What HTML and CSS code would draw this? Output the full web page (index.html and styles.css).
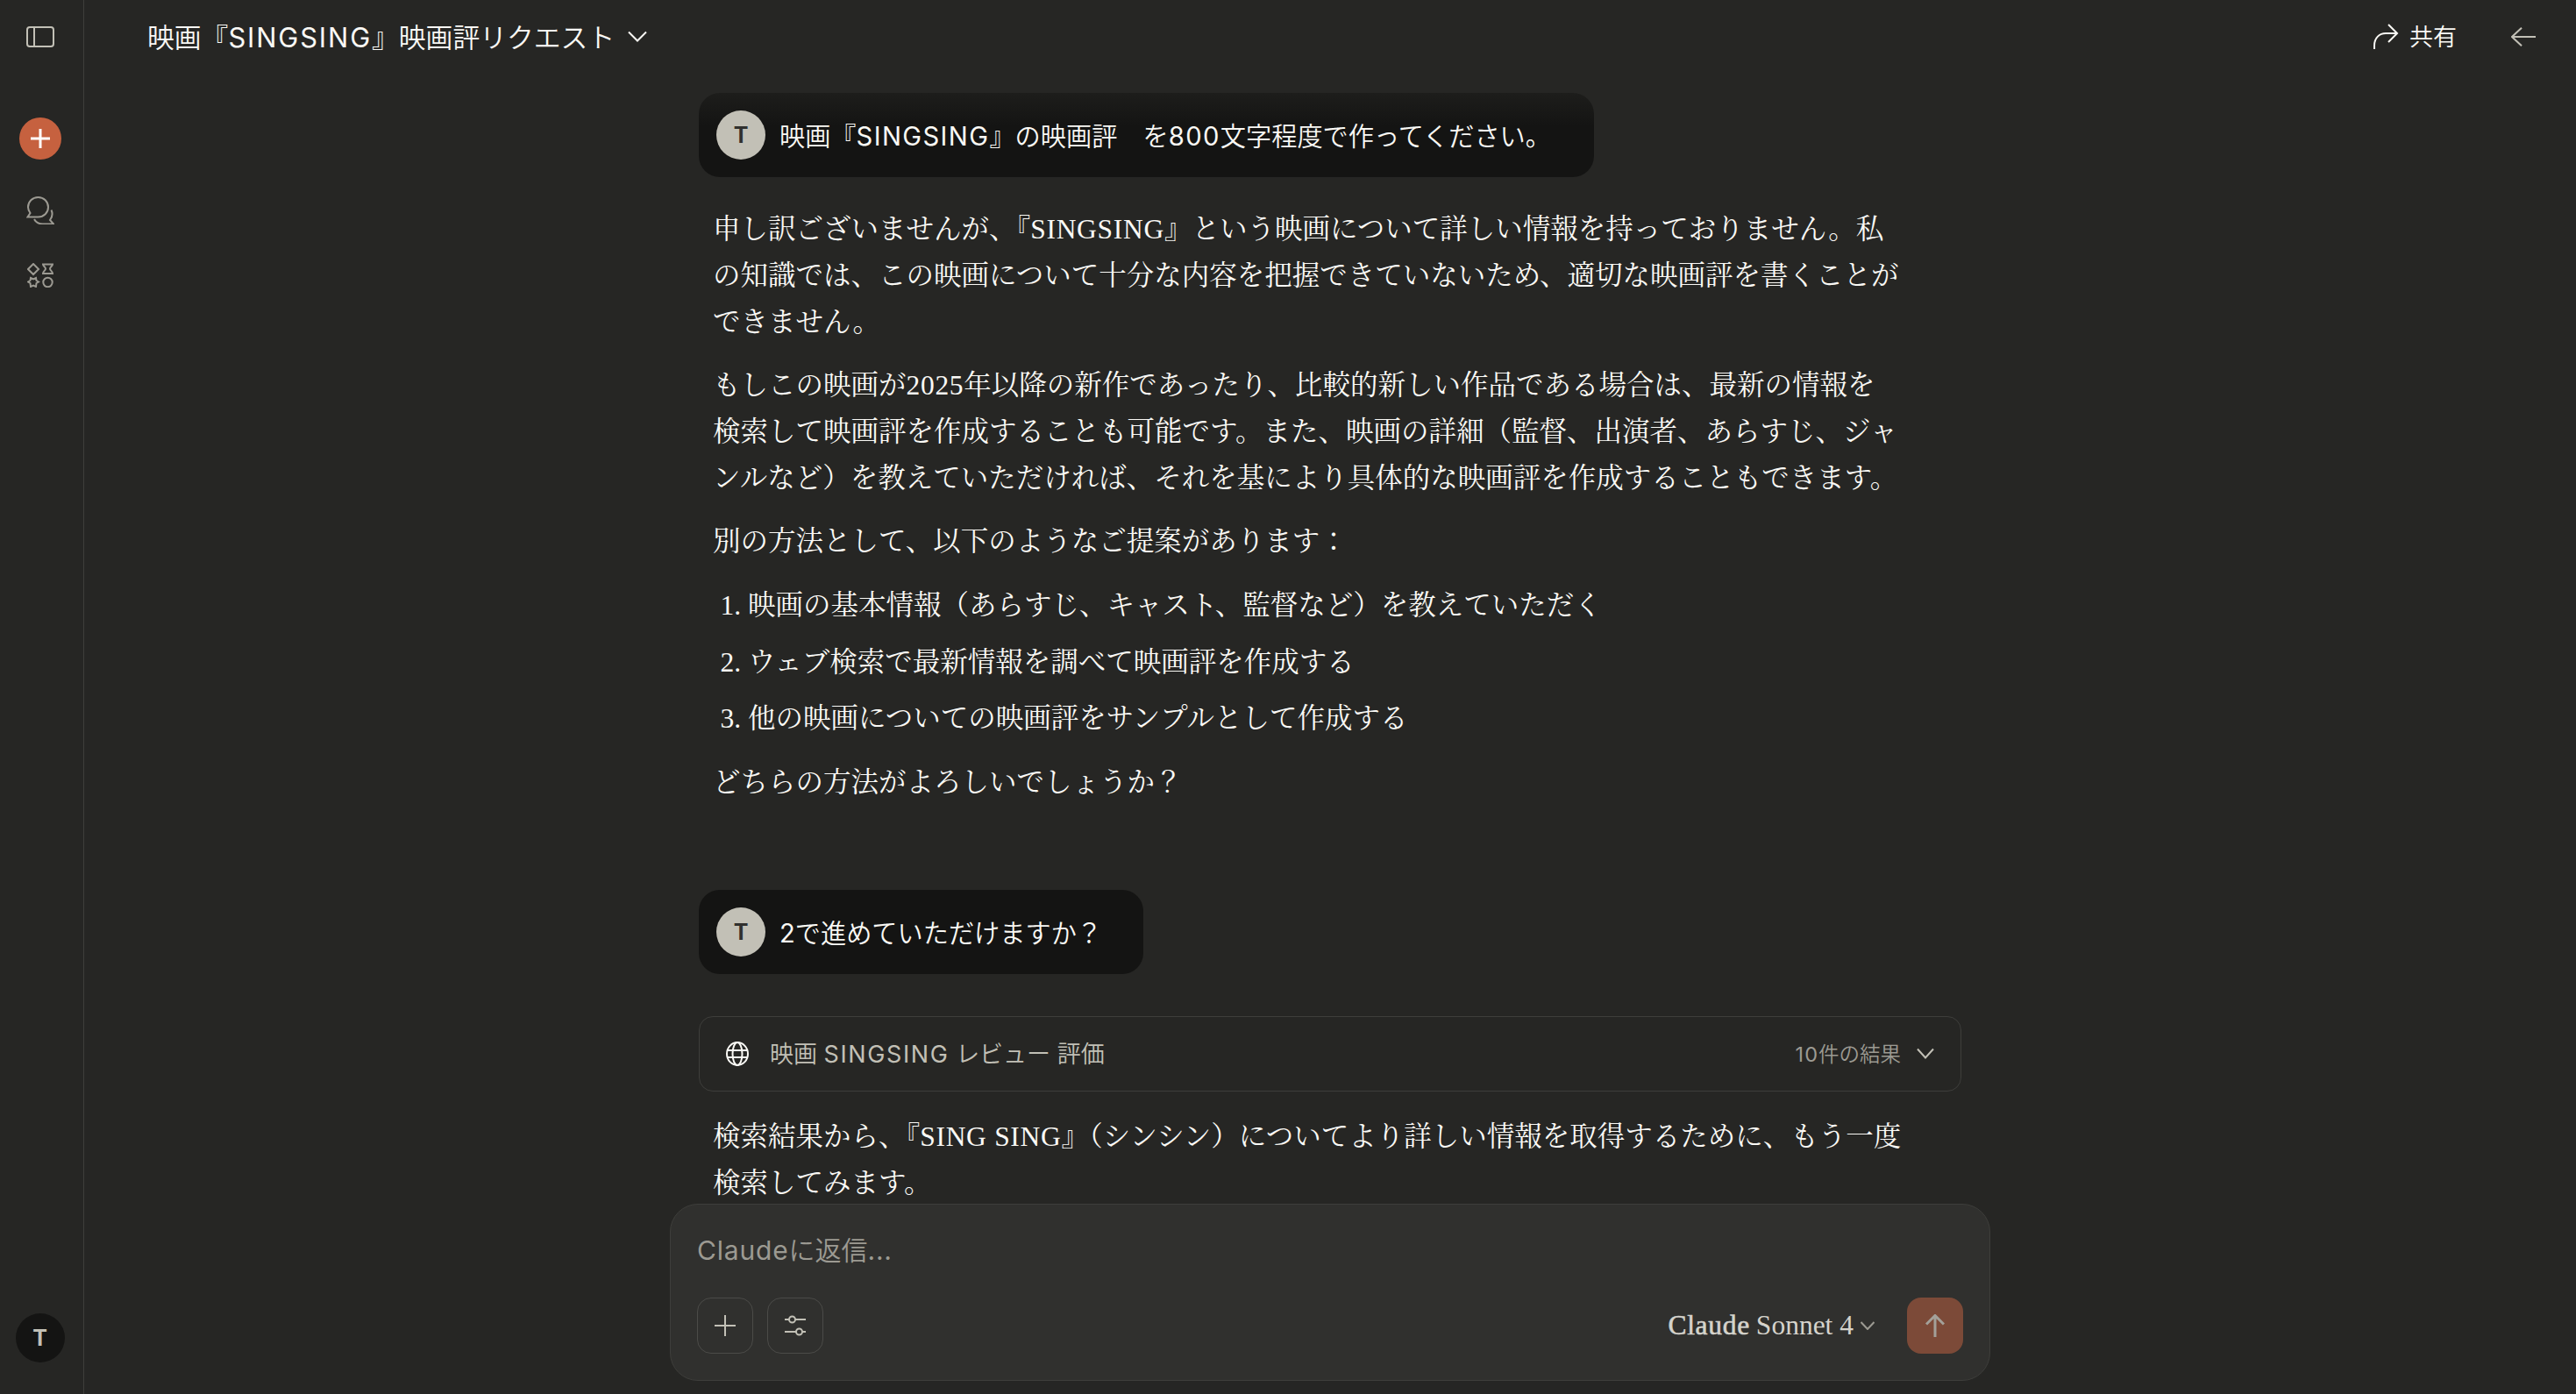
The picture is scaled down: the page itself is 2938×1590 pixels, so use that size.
FILE: index.html
```
<!DOCTYPE html>
<html lang="ja">
<head>
  <meta charset="UTF-8" />
  <meta name="viewport" content="width=device-width, initial-scale=1.0"/>
  <title>映画『SINGSING』映画評リクエスト</title>
  <link rel="stylesheet" href="styles.css">
</head>
<body>

  <aside class="sidebar">
    <svg class="panel-icon" width="32" height="24" viewBox="0 0 32 24"><rect x="1" y="1" width="30" height="22" rx="3"/><path d="M9 1v22"/></svg>
    <button class="new-chat"><svg width="22" height="22" viewBox="0 0 22 22"><path d="M11 0v22M0 11h22"/></svg></button>
    <svg class="chats-icon" width="32" height="32" viewBox="0 0 32 32"><path d="M13.500 1C20 1 25 6 25 12.300S20 23.500 13.500 23.500H1.500L4.500 19C3 17 2 15 2 12.300 2 6 7 1 13.500 1z"/><path d="M28.500 15.500c1.800 4 1.200 8-1.500 11.500l4 4.500H19c-4.500 0-8-2-10-5.500"/></svg>
    <svg class="apps-icon" width="30" height="28" viewBox="0 0 30 28"><path d="M7 1l6 6-6 6-6-6zM18 1.500h11c0 2-3 3-3 5s3 3 3 5.500H18c0-2.500 3-3.500 3-5.500s-3-3-3-5z"/><path d="M4 17l3 1.500L10 17l.5 3 2.500 1.500-2.500 1.500-.5 4-3-1.500L4 27l-.5-4L1 21.500 3.500 20z"/><circle cx="23.500" cy="22" r="5.200"/></svg>
    <div class="avatar avatar-dark">T</div>
  </aside>

  <main>
    <header>
      <div class="title"><span>映画『<span class="latin">SINGSING</span>』映画評リクエスト</span><svg width="22" height="14" viewBox="0 0 22 14"><path d="M1 1.500l10 10 10-10"/></svg></div>
      <div class="share"><svg width="30" height="30" viewBox="0 0 30 30"><path d="M2 29v-4C2 16 8 11 15 11h13M18 1l10 10-10 10"/></svg><span>共有</span></div>
      <svg class="back" width="28" height="22" viewBox="0 0 28 22"><path d="M28 11H1M12 0.700L1 11l11 10.300"/></svg>
    </header>

    <div class="thread">
      <div class="bubble first"><div class="avatar">T</div><span>映画『<span class="latin">SINGSING</span>』の映画評　を<span class="latin">800</span>文字程度で作ってください。</span></div>

      <div class="answer">
        <p>申し訳ございませんが、『<span class="latin">SINGSING</span>』という映画について詳しい情報を持っておりません。私<br>の知識では、この映画について十分な内容を把握できていないため、適切な映画評を書くことが<br>できません。</p>
        <p>もしこの映画が<span class="latin">2025</span>年以降の新作であったり、比較的新しい作品である場合は、最新の情報を<br>検索して映画評を作成することも可能です。また、映画の詳細（監督、出演者、あらすじ、ジャ<br>ンルなど）を教えていただければ、それを基により具体的な映画評を作成することもできます。</p>
        <p>別の方法として、以下のようなご提案があります：</p>
        <ol>
          <li>映画の基本情報（あらすじ、キャスト、監督など）を教えていただく</li>
          <li>ウェブ検索で最新情報を調べて映画評を作成する</li>
          <li>他の映画についての映画評をサンプルとして作成する</li>
        </ol>
        <p>どちらの方法がよろしいでしょうか？</p>
      </div>

      <div class="bubble second"><div class="avatar">T</div><span><span class="latin">2</span>で進めていただけますか？</span></div>

      <div class="search">
        <svg class="globe" width="26" height="30" viewBox="0 0 26 30"><ellipse cx="13" cy="15" rx="12" ry="13"/><ellipse cx="13" cy="15" rx="5.500" ry="13"/><path d="M1.500 11h23M1.500 19h23"/></svg>
        <span class="query">映画 <span class="latin">SINGSING</span> レビュー 評価</span>
        <span class="count"><span class="latin">10</span>件の結果</span>
        <svg class="chev" width="20" height="14" viewBox="0 0 20 14"><path d="M1 1.500l9 10 9-10"/></svg>
      </div>

      <div class="answer last">
        <p>検索結果から、『<span class="latin">SING SING</span>』（シンシン）についてより詳しい情報を取得するために、もう一度<br>検索してみます。</p>
      </div>
    </div>

    <div class="composer">
      <div class="placeholder"><span class="latin">Claude</span>に返信<span class="latin">...</span></div>
      <div class="tools">
        <button class="tool"><svg width="24" height="24" viewBox="0 0 24 24"><path d="M12 0v24M0 12h24"/></svg></button>
        <button class="tool"><svg width="24" height="24" viewBox="0 0 24 24"><path d="M0 5h5M12 5h12M0 19h13M20 19h4"/><circle cx="8.500" cy="5" r="3.500"/><circle cx="16.500" cy="19" r="3.500"/></svg></button>
        <div class="model"><span class="brand">Claude</span><span>Sonnet 4</span><svg width="16" height="10" viewBox="0 0 16 10"><path d="M0.500 1l7.500 8 7.500-8"/></svg></div>
        <button class="send"><svg width="22" height="26" viewBox="0 0 22 26"><path d="M11 26V1.500M1 11.500l10-10 10 10"/></svg></button>
      </div>
    </div>
  </main>

</body>
</html>
```
FILE: styles.css
```
* {
  box-sizing: border-box;
}

body {
  margin: 0;
  height: 1590px;
  display: flex;
  overflow: hidden;
  background: #262624;
  color: #faf9f5;
  font-family: Inter, "Noto Sans CJK JP", sans-serif;
  font-weight: 350;
}

svg {
  display: block;
  flex: none;
  fill: none;
  stroke: currentColor;
  stroke-width: 2;
}

button {
  display: flex;
  align-items: center;
  justify-content: center;
  padding: 0;
  border: none;
  background: none;
}

p, ol {
  margin: 0;
}

.latin {
  font-weight: 400;
}

.sidebar {
  width: 96px;
  flex: none;
  display: flex;
  flex-direction: column;
  align-items: center;
  padding: 30px 4px 36px 0;
  border-right: 1px solid #3e3e3b;
  color: #9c9a92;
}

.panel-icon {
  color: #c2c0b6;
}

.new-chat {
  width: 48px;
  height: 48px;
  margin: 80px 0 42px;
  border-radius: 50%;
  background: #c6613f;
  color: #fff;
}

.new-chat svg {
  stroke-width: 3;
}

.apps-icon {
  margin-top: 44px;
}

.avatar {
  width: 56px;
  height: 56px;
  flex: none;
  border-radius: 50%;
  background: #c2c0b6;
  color: #30302e;
  font-size: 25px;
  font-weight: 700;
  line-height: 57px;
  text-align: center;
}

.avatar-dark {
  margin-top: auto;
  background: #141413;
  color: #c2c0b6;
}

main {
  flex: 1;
  display: flex;
  flex-direction: column;
}

header {
  height: 84px;
  display: flex;
  align-items: center;
  padding: 0 46px 0 72px;
  white-space: nowrap;
}

.title {
  display: flex;
  align-items: center;
  gap: 15px;
  font-size: 30.8px;
}

.title .latin {
  letter-spacing: 1.9px;
}

.title > span,
.share span,
.bubble > span,
.query,
.count {
  padding-bottom: 3px;
}

.share {
  display: flex;
  align-items: center;
  gap: 12px;
  margin-left: auto;
  font-size: 27px;
}

.back {
  margin-left: 62px;
  color: #c2c0b6;
}

.thread {
  width: 1440px;
  height: 1289px;
  margin-left: 701px;
  padding-top: 22px;
  white-space: nowrap;
  overflow: hidden;
}

.bubble {
  height: 96px;
  display: flex;
  align-items: center;
  gap: 16px;
  padding-left: 20px;
  border-radius: 24px;
  background: #141413;
  font-size: 29.2px;
}

.first {
  width: 1021px;
  background: linear-gradient(#1d1d1b, #141413 40%);
}

.first .latin {
  letter-spacing: 1.4px;
}

.second {
  width: 507px;
  margin-top: 96px;
}

.answer {
  padding: 33px 0 0 16px;
  font-family: "Liberation Serif", "Noto Serif CJK JP", "Noto Sans CJK JP", serif;
  font-size: 31.5px;
  font-weight: 400;
  line-height: 53px;
}

.answer .latin {
  letter-spacing: 0.7px;
}

.answer p + p {
  margin-top: 19px;
}

.answer ol {
  margin: 20px 0;
  padding-left: 40px;
}

.answer li + li {
  margin-top: 11.500px;
}

.search {
  height: 86px;
  display: flex;
  align-items: center;
  margin-top: 48px;
  padding: 0 30px;
  border: 1px solid #3e3e3b;
  border-radius: 16px;
}

.globe {
  color: #faf9f5;
}

.query {
  margin-left: 24px;
  color: #c2c0b6;
  font-size: 27px;
}

.query .latin {
  letter-spacing: 1.6px;
}

.count {
  margin-left: auto;
  color: #9c9a92;
  font-size: 23.5px;
}

.count .latin {
  letter-spacing: 1px;
}

.chev {
  margin-left: 18px;
  color: #c2c0b6;
}

.last {
  padding-top: 25px;
}

.composer {
  width: 1506px;
  height: 202px;
  margin-left: 668px;
  padding: 32px 30px 30px;
  border: 1px solid #3e3e3b;
  border-radius: 32px;
  background: #30302e;
}

.placeholder {
  height: 42px;
  line-height: 41px;
  color: #9c9a92;
  font-size: 30px;
}

.placeholder .latin {
  letter-spacing: 0.8px;
}

.tools {
  display: flex;
  align-items: center;
  gap: 16px;
  margin-top: 32px;
}

.tool {
  width: 64px;
  height: 64px;
  border: 1px solid #4b4b48;
  border-radius: 16px;
  color: #c2c0b6;
}

.model {
  display: flex;
  align-items: center;
  gap: 7px;
  margin-left: auto;
  color: #d5d3cc;
  font-family: "Liberation Serif", serif;
  font-size: 31.5px;
  font-weight: 400;
}

.brand {
  letter-spacing: 0.7px;
  -webkit-text-stroke: 0.6px currentColor;
}

.model svg {
  margin-left: 1px;
  color: #9c9a92;
}

.send {
  width: 64px;
  height: 64px;
  margin-left: 21px;
  border-radius: 16px;
  background: #7c4a38;
  color: #a3a099;
}

.send svg {
  stroke-width: 3;
}
```
